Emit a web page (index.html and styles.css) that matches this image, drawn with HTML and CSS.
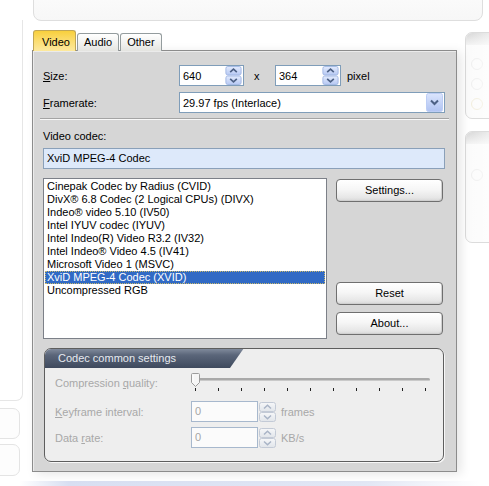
FILE: index.html
```html
<!DOCTYPE html>
<html>
<head>
<meta charset="utf-8">
<link rel="stylesheet" href="styles.css">
</head>
<body>
<svg class="defs" width="0" height="0" aria-hidden="true">
  <defs>
    <linearGradient id="gSpin" x1="0" y1="0" x2="0" y2="1">
      <stop offset="0" stop-color="#e3ebfd"/>
      <stop offset="1" stop-color="#b6c8f3"/>
    </linearGradient>
    <linearGradient id="gSpinOff" x1="0" y1="0" x2="0" y2="1">
      <stop offset="0" stop-color="#f6f7f9"/>
      <stop offset="1" stop-color="#e1e5ea"/>
    </linearGradient>
    <linearGradient id="gDrop" x1="0" y1="0" x2="0" y2="1">
      <stop offset="0" stop-color="#dbe5fd"/>
      <stop offset="1" stop-color="#b0c3f2"/>
    </linearGradient>
    <symbol id="spin" viewBox="0 0 17 20">
      <rect x="0.5" y="0.5" width="16" height="9" rx="2" fill="url(#gSpin)" stroke="#a2b7e4"/>
      <rect x="0.5" y="10.5" width="16" height="9" rx="2" fill="url(#gSpin)" stroke="#a2b7e4"/>
      <path d="M5 6.5 L8.5 3.2 L12 6.5" fill="none" stroke="#4d6185" stroke-width="1.7"/>
      <path d="M5 13.5 L8.5 16.8 L12 13.5" fill="none" stroke="#4d6185" stroke-width="1.7"/>
    </symbol>
    <symbol id="spinOff" viewBox="0 0 17 20">
      <rect x="0.5" y="0.5" width="16" height="9" rx="2" fill="url(#gSpinOff)" stroke="#c3cad6"/>
      <rect x="0.5" y="10.5" width="16" height="9" rx="2" fill="url(#gSpinOff)" stroke="#c3cad6"/>
      <path d="M5 6.5 L8.5 3.2 L12 6.5" fill="none" stroke="#a9b4c6" stroke-width="1.5"/>
      <path d="M5 13.5 L8.5 16.8 L12 13.5" fill="none" stroke="#a9b4c6" stroke-width="1.5"/>
    </symbol>
    <symbol id="drop" viewBox="0 0 17 19">
      <rect x="0.5" y="0.5" width="16" height="18" rx="2" fill="url(#gDrop)" stroke="#bccdf5"/>
      <path d="M5 7.5 L8.5 11 L12 7.5" fill="none" stroke="#4d6185" stroke-width="2"/>
    </symbol>
  </defs>
</svg>

<div class="page">
  <div class="deco deco-top"></div>
  <div class="deco deco-left"></div>
  <div class="deco deco-left2"></div>
  <div class="deco deco-left3"></div>
  <div class="deco deco-right1">
    <div class="deco-head"></div>
    <span class="radio r1"></span>
    <span class="radio r2"></span>
    <span class="radio r3"></span>
  </div>
  <div class="deco deco-right2">
    <div class="deco-head"></div>
    <span class="radio r4"></span>
  </div>
  <div class="deco deco-bottom"></div>

  <div class="dialog">
    <div class="tabs">
      <div class="tab active">Video</div>
      <div class="tab">Audio</div>
      <div class="tab">Other</div>
    </div>
    <div class="panel">
      <div class="row">
        <span class="lbl"><u>S</u>ize:</span>
        <div class="spinbox w-a"><span class="val">640</span><svg class="spin"><use href="#spin"/></svg></div>
        <span class="times">x</span>
        <div class="spinbox w-b"><span class="val">364</span><svg class="spin"><use href="#spin"/></svg></div>
        <span class="unit">pixel</span>
      </div>
      <div class="row row-rate">
        <span class="lbl"><u>F</u>ramerate:</span>
        <div class="select"><span class="val">29.97 fps (Interlace)</span><svg class="drop"><use href="#drop"/></svg></div>
      </div>
      <div class="sep"></div>
      <div class="caption">Video codec:</div>
      <div class="codec-field">XviD MPEG-4 Codec</div>
      <div class="codec-row">
        <ul class="list">
          <li>Cinepak Codec by Radius (CVID)</li>
          <li>DivX® 6.8 Codec (2 Logical CPUs) (DIVX)</li>
          <li>Indeo® video 5.10 (IV50)</li>
          <li>Intel IYUV codec (IYUV)</li>
          <li>Intel Indeo(R) Video R3.2 (IV32)</li>
          <li>Intel Indeo® Video 4.5 (IV41)</li>
          <li>Microsoft Video 1 (MSVC)</li>
          <li class="sel">XviD MPEG-4 Codec (XVID)</li>
          <li>Uncompressed RGB</li>
        </ul>
        <div class="btns">
          <div class="btn btn-settings">Settings...</div>
          <div class="btn btn-reset">Reset</div>
          <div class="btn">About...</div>
        </div>
      </div>
      <div class="group">
        <div class="group-head">Codec common settings</div>
        <div class="grow grow-slider">
          <span class="dlbl">Compression <u>q</u>uality:</span>
          <div class="slider">
            <div class="track"></div>
            <svg class="thumb" viewBox="0 0 9 14"><path d="M0.5 1.5 Q0.5 0.5 1.5 0.5 H7.5 Q8.5 0.5 8.5 1.5 V9.5 L4.5 13.5 L0.5 9.5 Z" fill="#f5f5f5" stroke="#9c9c9c"/><path d="M2 2 V9" stroke="#fff"/></svg>
            <div class="ticks"><i></i><i></i><i></i><i></i><i></i><i></i><i></i><i></i><i></i><i></i><i></i></div>
          </div>
        </div>
        <div class="grow grow-key">
          <span class="dlbl"><u>K</u>eyframe interval:</span>
          <div class="dinput">0</div>
          <svg class="dspin"><use href="#spinOff"/></svg>
          <span class="dunit">frames</span>
        </div>
        <div class="grow grow-rate">
          <span class="dlbl">Data <u>r</u>ate:</span>
          <div class="dinput">0</div>
          <svg class="dspin"><use href="#spinOff"/></svg>
          <span class="dunit">KB/s</span>
        </div>
      </div>
    </div>
  </div>
</div>
</body>
</html>
```

FILE: styles.css
```css
* { box-sizing: border-box; }

body {
  margin: 0;
  font-family: "Liberation Sans", Arial, sans-serif;
  font-size: 11px;
  color: #000;
  background: #fff;
}

.defs { position: absolute; width: 0; height: 0; }

.page {
  position: relative;
  width: 489px;
  height: 486px;
  overflow: hidden;
  background: #fff;
}

/* faded background windows */
.deco { position: absolute; }

.deco-top {
  left: 33px;
  top: -12px;
  width: 450px;
  height: 33px;
  border: 1px solid #dedede;
  border-radius: 8px;
  background: linear-gradient(#fcfcfc, #f7f7f7);
}

.deco-left {
  left: -12px;
  top: 20px;
  width: 35px;
  height: 381px;
  border: 1px solid #e6e6e6;
  border-top: none;
  border-radius: 0 0 7px 0;
  background: #fff;
}

.deco-left2 {
  left: -12px;
  top: 408px;
  width: 32px;
  height: 31px;
  border: 1px solid #e4e4e4;
  border-radius: 7px;
  background: #fdfdfd;
}

.deco-left3 {
  left: -12px;
  top: 444px;
  width: 32px;
  height: 32px;
  border: 1px solid #e4e4e4;
  border-radius: 7px;
  background: #fdfdfd;
}

.deco-right1,
.deco-right2 {
  left: 465px;
  width: 40px;
  border: 1px solid #dcdcdc;
  border-radius: 7px;
  background: #fbfbfb;
  overflow: hidden;
}

.deco-right1 { top: 32px; height: 87px; }
.deco-right2 { top: 131px; height: 112px; }

.deco-head {
  height: 12px;
  background: linear-gradient(#d6d6d6, #f3f3f3);
}

.radio {
  position: absolute;
  left: 5px;
  width: 12px;
  height: 12px;
  border: 1px solid #ededed;
  border-radius: 50%;
}
.r1 { top: 25px; }
.r2 { top: 45px; }
.r3 { top: 65px; border-color: #f1ecd9; }
.r4 { top: 37px; }

.deco-right1::after,
.deco-right2::after {
  content: "";
  position: absolute;
  inset: 0;
  background: linear-gradient(to right, rgba(255,255,255,0), rgba(255,255,255,0.85));
}

.deco-bottom {
  left: 0;
  top: 481px;
  width: 489px;
  height: 5px;
  background: linear-gradient(to right, rgba(220,226,242,0) 4%, #d8dff2 14%, #e2e7f5 75%, rgba(230,234,246,0) 98%);
}

/* dialog */
.dialog {
  position: relative;
  z-index: 1;
  margin-left: 32px;
  padding-top: 30px;
  width: 425px;
}

.tabs {
  display: flex;
  align-items: flex-end;
  gap: 1px;
  height: 21px;
  padding-left: 1px;
  margin-bottom: -1px;
  position: relative;
  z-index: 2;
}

.tab {
  height: 18px;
  padding: 0 6px;
  line-height: 17px;
  border: 1px solid #949c9e;
  border-bottom: none;
  border-radius: 3px 3px 0 0;
  background: linear-gradient(#ffffff, #f0f0ee 60%, #e4e4e0);
}

.tab.active {
  height: 21px;
  padding: 0 8px 0 8px;
  line-height: 22px;
  width: 43px;
  border-color: #c0a656;
  background: linear-gradient(#f8cf3c, #fbdc6c 45%, #fde99e);
}

.panel {
  height: 422px;
  border: 1px solid #8c8c8c;
  background: #d6d6d6;
  padding: 14px 11px 0 10px;
  box-shadow: inset 1px 1px 0 #ebebeb, 4px 2px 10px rgba(0,0,0,0.10);
}

.row {
  display: flex;
  align-items: center;
  height: 21px;
}

.row-rate { margin-top: 6px; }

.lbl {
  width: 136px;
  flex: none;
}

.spinbox {
  display: flex;
  align-items: center;
  justify-content: space-between;
  height: 21px;
  border: 1px solid #7f9db9;
  background: #fff;
  padding: 0 1px 0 3px;
}

.w-a { width: 65px; }
.w-b { width: 66px; }

.spin {
  width: 17px;
  height: 19px;
  display: block;
}

.times {
  width: 31px;
  padding-left: 10px;
  flex: none;
}

.unit { margin-left: 6px; }

.select {
  display: flex;
  align-items: center;
  justify-content: space-between;
  width: 266px;
  height: 21px;
  border: 1px solid #7f9db9;
  background: #fff;
  padding: 0 1px 0 3px;
}

.drop {
  width: 17px;
  height: 19px;
  display: block;
}

.sep {
  margin: 5px -4px 0 -3px;
  height: 2px;
  border-top: 1px solid #a4a4a4;
  border-bottom: 1px solid #f8f8f8;
}

.caption {
  margin-top: 10px;
  height: 13px;
  line-height: 13px;
}

.codec-field {
  margin-top: 5px;
  height: 21px;
  line-height: 19px;
  padding-left: 3px;
  border: 1px solid #8aa0b9;
  background: #dde9fa;
}

.codec-row {
  display: flex;
  gap: 9px;
  margin-top: 9px;
  height: 161px;
}

.list {
  list-style: none;
  margin: 0;
  padding: 1px;
  width: 284px;
  height: 161px;
  border: 1px solid #7c8088;
  background: #fff;
}

.list li {
  height: 13px;
  line-height: 13px;
  padding-left: 2px;
  white-space: nowrap;
}

.list li.sel {
  background: #316ac5;
  color: #fff;
  outline: 1px dotted #c9b86a;
  outline-offset: -1px;
}

.btns {
  display: flex;
  flex-direction: column;
  width: 107px;
  padding: 1px 0 4px;
}

.btn {
  height: 23px;
  line-height: 21px;
  text-align: center;
  border: 1px solid #6f6f6f;
  border-radius: 4px;
  background: linear-gradient(#ffffff, #f6f6f6 45%, #e6e6e6 85%, #d6d6d6);
  box-shadow: inset -1px -1px 0 #d0d0d0;
}

.btn-reset { margin-top: auto; margin-bottom: 7px; }

/* group */
.group {
  margin: 9px 1px 0 1px;
  height: 114px;
  border: 1px solid #5e5e5e;
  border-radius: 7px;
  background: #eeeeee;
  overflow: hidden;
  box-shadow: 1px 1px 0 #f7f7f7;
}

.group-head {
  width: 199px;
  height: 20px;
  margin-top: -1px;
  line-height: 21px;
  padding-left: 13px;
  color: #e6eaf0;
  background: linear-gradient(#8690a1, #5b667a 35%, #3e495d);
  clip-path: polygon(0 0, 100% 0, calc(100% - 14px) 100%, 0 100%);
}

.grow {
  display: flex;
  align-items: center;
  padding-left: 10px;
  height: 21px;
  color: #a8a8a8;
}

.grow-slider {
  margin-top: 4px;
  height: 22px;
}

.grow-key { margin-top: 7px; }
.grow-rate { margin-top: 5px; }

.dlbl {
  width: 136px;
  flex: none;
}

.slider {
  position: relative;
  width: 240px;
  height: 22px;
}

.track {
  margin: 6px 1px 0 4px;
  height: 3px;
  border-radius: 2px;
  background: #a9a9a9;
  border-bottom: 1px solid #c9c9c9;
}

.thumb {
  position: absolute;
  left: 0;
  top: 1px;
  width: 9px;
  height: 14px;
}

.ticks {
  display: flex;
  justify-content: space-between;
  margin: 7px 5px 0 4px;
  width: 231px;
}

.ticks i {
  display: block;
  width: 1px;
  height: 3px;
  background: #222;
}

.dinput {
  width: 67px;
  height: 21px;
  line-height: 19px;
  padding-left: 3px;
  border: 1px solid #a7b8cd;
  background: #fbfbfb;
  color: #a6a6a6;
}

.dspin {
  width: 17px;
  height: 20px;
  margin-left: 1px;
  display: block;
}

.dunit { margin-left: 5px; }
```
